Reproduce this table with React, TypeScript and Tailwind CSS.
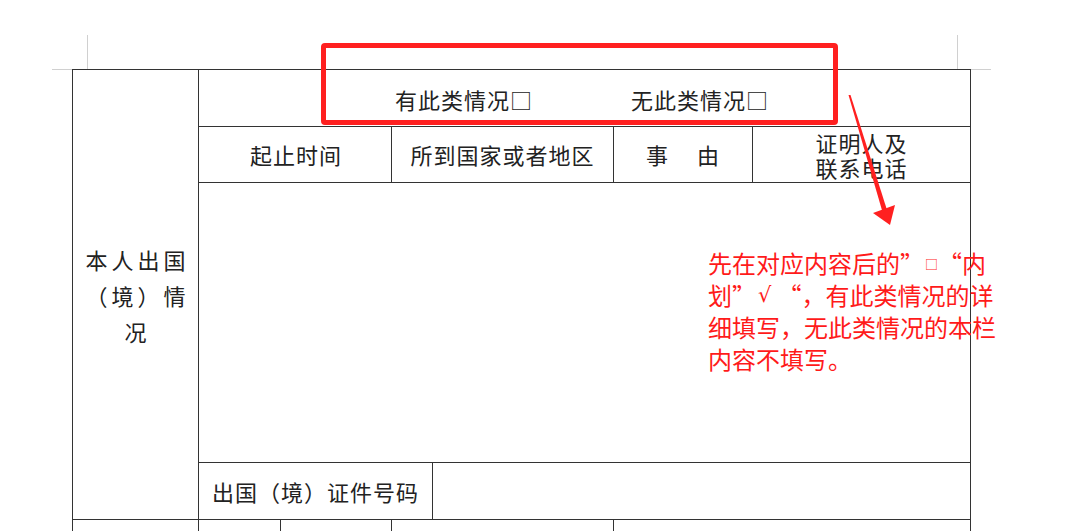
import React from 'react';

const cjk = "font-['Noto_Sans_CJK_SC',sans-serif]";

export default function App() {
  return (
    <div className={`relative w-[1080px] h-[531px] overflow-hidden bg-white text-[#222] ${cjk}`}>
      {/* crop marks */}
      <div className="absolute left-[87px] top-[35px] w-px h-[34px] bg-[#d0d0d0]" />
      <div className="absolute left-[52px] top-[69px] w-[20px] h-px bg-[#d0d0d0]" />
      <div className="absolute left-[957px] top-[35px] w-px h-[34px] bg-[#d0d0d0]" />
      <div className="absolute left-[971px] top-[69px] w-[20px] h-px bg-[#d0d0d0]" />

      <div className="pt-[69px] pl-[72px]">
        <div className="w-[899px] border-t border-l border-r border-[#333]">
          <div className="flex h-[449px]">
            <div className="w-[126px] border-r border-[#333] flex items-center justify-center">
              <div className="text-[22px] leading-[36px] tracking-[4px] text-center pl-[4px]">
                <div>本人出国</div>
                <div>（境）情</div>
                <div>况</div>
              </div>
            </div>
            <div className="flex-1 flex flex-col">
              <div className="h-[57px] border-b border-[#333] flex items-center pt-[3px] text-[22px] tracking-[1px]">
                <span className="ml-[196px]">有此类情况□</span>
                <span className="ml-[98px]">无此类情况□</span>
              </div>
              <div className="h-[56px] border-b border-[#333] flex text-[22px] tracking-[1px]">
                <div className="w-[193px] border-r border-[#333] flex items-center justify-center pl-[2px]">起止时间</div>
                <div className="w-[222px] border-r border-[#333] flex items-center justify-center">所到国家或者地区</div>
                <div className="w-[139px] border-r border-[#333] flex items-center justify-center">
                  <span>事</span>
                  <span className="ml-[28px]">由</span>
                </div>
                <div className="flex-1 flex flex-col items-center justify-center leading-[25px] tracking-[1px]">
                  <div>证明人及</div>
                  <div>联系电话</div>
                </div>
              </div>
              <div className="h-[280px] border-b border-[#333]" />
              <div className="flex-1 flex">
                <div className="w-[234px] border-r border-[#333] flex items-center pl-[13px] text-[22px] tracking-[1px]">
                  出国（境）证件号码
                </div>
                <div className="flex-1" />
              </div>
            </div>
          </div>
          <div className="flex h-[30px] border-t border-[#333]">
            <div className="w-[126px] border-r border-[#333]" />
            <div className="w-[82px] border-r border-[#333]" />
            <div className="w-[111px] border-r border-[#333]" />
            <div className="w-[222px] border-r border-[#333]" />
            <div className="flex-1" />
          </div>
        </div>
      </div>

      {/* annotation: red box */}
      <div className="absolute left-[321px] top-[43px] w-[517px] h-[82px] border-[5px] border-[#ff2020] rounded-[4px]" />

      {/* annotation: arrow */}
      <svg className="absolute left-0 top-0 pointer-events-none" width="1080" height="531">
        <polygon points="848.5,95 850.5,95 887,210 882.5,212" fill="#ff2020" />
        <polygon points="873,213 895,205 890,225" fill="#ff2020" />
      </svg>

      {/* annotation: note */}
      <div className="absolute left-[708px] top-[247px] text-[24px] leading-[32px] text-[#ff1a1a] whitespace-nowrap">
        <div className="h-[32px] flex items-center">
          <span>先在对应内容后的”</span>
          <span className="text-[13px] leading-none pl-[1px]">□</span>
          <span>“内</span>
        </div>
        <div className="h-[32px] flex items-center">
          <span>划”</span>
          <span className="text-[21px] leading-none font-['DejaVu_Sans',sans-serif] pl-[2px] pr-[6px]">√</span>
          <span>“，有此类情况的详</span>
        </div>
        <div className="h-[32px]">细填写，无此类情况的本栏</div>
        <div className="h-[32px]">内容不填写。</div>
      </div>
    </div>
  );
}
